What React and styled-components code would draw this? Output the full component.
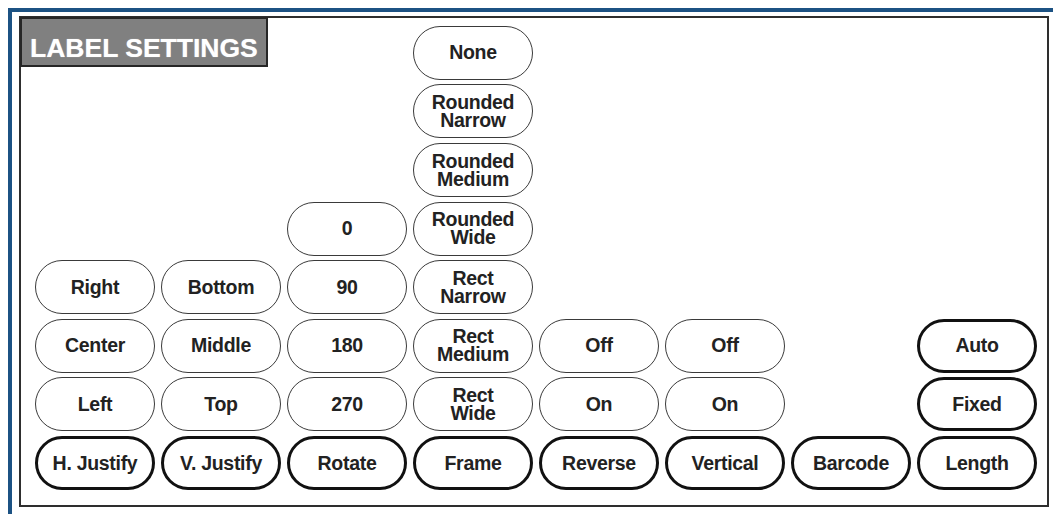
import React from "react";
import styled, { createGlobalStyle } from "styled-components";

const Global = createGlobalStyle`
  html, body { margin: 0; padding: 0; background: #ffffff; }
  body { padding: 8px 0 0 8px; font-family: "Liberation Sans", Arial, sans-serif; }
`;

const Outer = styled.div`
  border-top: 4px solid #1c5283;
  border-left: 4px solid #1c5283;
  padding: 4px 0 0 7px;
  height: 520px;
  box-sizing: border-box;
`;

const Frame = styled.div`
  position: relative;
  width: 1030px;
  height: 491px;
  box-sizing: border-box;
  border: 2px solid #2e2e2e;
  padding: 7px 0 15px 14px;
  display: flex;
  gap: 6px;
  align-items: flex-end;
`;

const Title = styled.div`
  position: absolute;
  top: -1px;
  left: -1px;
  width: 248px;
  height: 50px;
  box-sizing: border-box;
  background: #808080;
  border: 2px solid #262626;
  color: #ffffff;
  font-family: "Liberation Sans", Arial, sans-serif;
  font-weight: 700;
  font-size: 26.5px;
  line-height: 26px;
  padding: 16px 0 0 8px;
  white-space: nowrap;
  text-shadow: 0 0 1px rgba(255, 255, 255, 0.6);
`;

const Column = styled.div`
  display: flex;
  flex-direction: column;
  justify-content: flex-end;
  gap: 4.6px;
  width: 120px;
  height: 100%;
`;

const Pill = styled.div`
  width: 120px;
  height: 54px;
  box-sizing: border-box;
  border-radius: 27px;
  border: ${(p) => (p.$strong ? "3px solid #111" : "1.5px solid #3a3a3a")};
  display: flex;
  align-items: center;
  justify-content: center;
  text-align: center;
  font-family: "Liberation Sans", Arial, sans-serif;
  font-weight: 700;
  font-size: 19.5px;
  line-height: 18px;
  padding-bottom: 1px;
  color: #222;
  letter-spacing: -0.3px;
  white-space: pre-line;
  background: #fff;
`;

const columns = [
  { items: ["Right", "Center", "Left"], head: "H. Justify" },
  { items: ["Bottom", "Middle", "Top"], head: "V. Justify" },
  { items: ["0", "90", "180", "270"], head: "Rotate" },
  {
    items: [
      "None",
      "Rounded\nNarrow",
      "Rounded\nMedium",
      "Rounded\nWide",
      "Rect\nNarrow",
      "Rect\nMedium",
      "Rect\nWide",
    ],
    head: "Frame",
  },
  { items: ["Off", "On"], head: "Reverse" },
  { items: ["Off", "On"], head: "Vertical" },
  { items: [], head: "Barcode" },
  { items: ["Auto", "Fixed"], head: "Length", strongItems: true },
];

export default function App() {
  return (
    <>
      <Global />
      <Outer>
        <Frame>
          {columns.map((c, i) => (
            <Column key={i}>
              {c.items.map((t, j) => (
                <Pill key={j} $strong={c.strongItems}>
                  {t}
                </Pill>
              ))}
              <Pill $strong>{c.head}</Pill>
            </Column>
          ))}
          <Title>LABEL SETTINGS</Title>
        </Frame>
      </Outer>
    </>
  );
}
